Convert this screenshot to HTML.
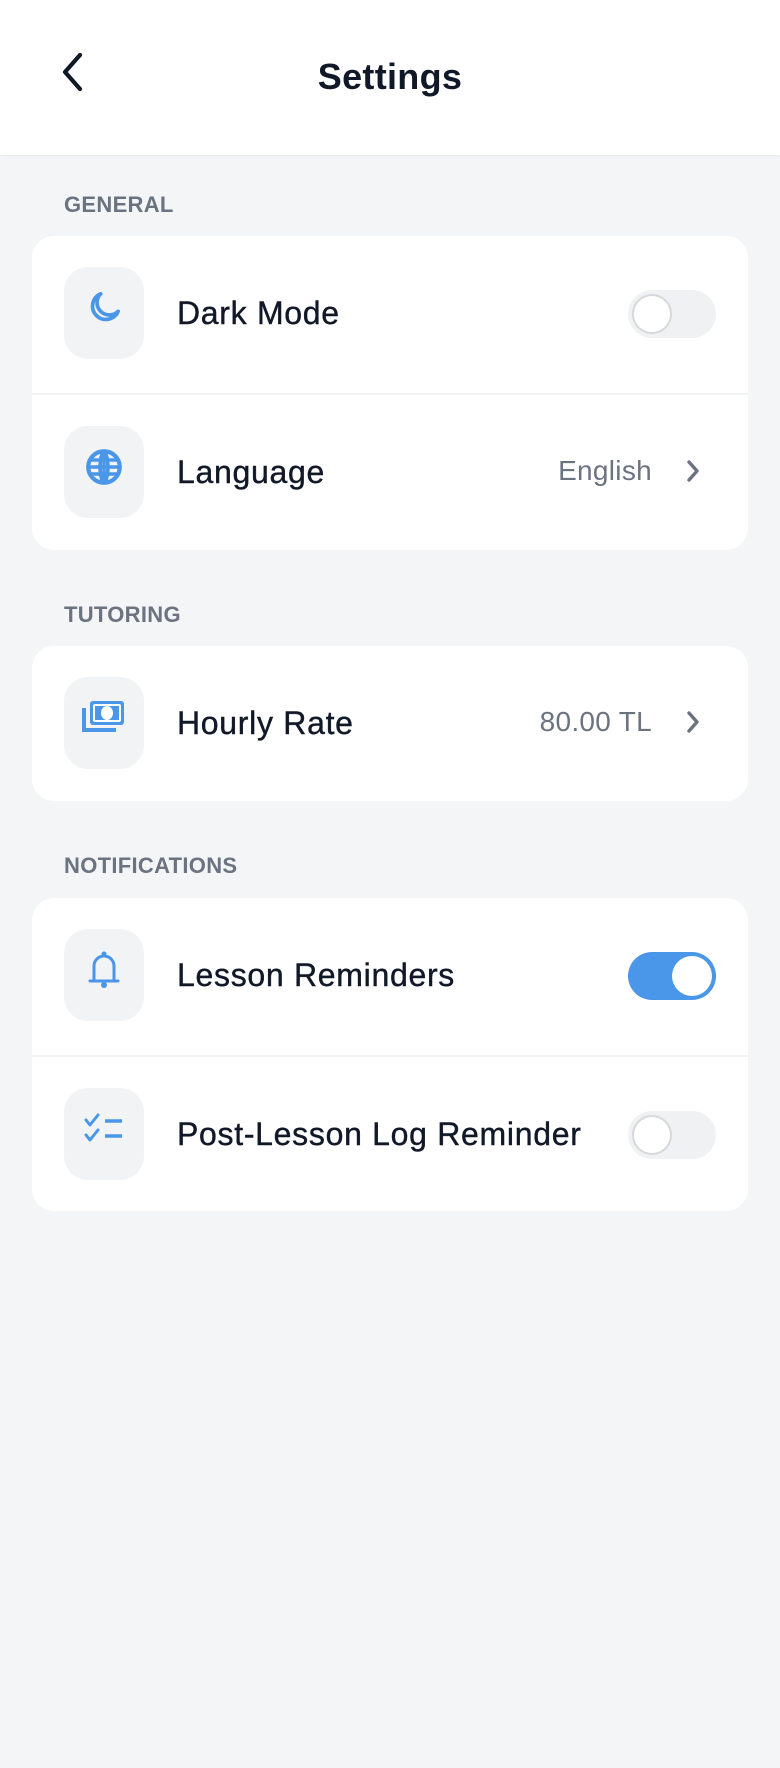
<!DOCTYPE html>
<html><head><meta charset="utf-8"><style>
*{margin:0;padding:0;box-sizing:border-box}
body{width:780px;height:1768px;background:#f4f5f7;font-family:"Liberation Sans",sans-serif;position:relative;overflow:hidden;color:#111827}
.hdr{position:absolute;left:0;top:0;width:780px;height:155px;background:#fff;box-shadow:0 1px 3px rgba(0,0,0,.06)}
.title{position:absolute;left:0;width:780px;top:56px;text-align:center;font-weight:bold;font-size:36px;color:#111827;letter-spacing:.3px}
.sec{position:absolute;left:64px;font-size:22px;font-weight:bold;color:#6b7280;letter-spacing:.3px}
.card{position:absolute;left:32px;width:716px;background:#fff;border-radius:22px;overflow:hidden}
.row{position:relative;height:157px}
.row+.row{border-top:2px solid #f1f2f4}
.ib{position:absolute;left:32px;top:31px;width:80px;height:92px;border-radius:24px;background:#f2f3f5;display:flex;align-items:center;justify-content:center}
.ib svg{margin-top:-10px}
.lbl{position:absolute;left:145px;top:59px;font-size:32px;color:#111827;letter-spacing:.7px;-webkit-text-stroke:.4px #111827}
.val{position:absolute;right:96px;top:60px;font-size:28px;color:#6b7280;letter-spacing:.3px}
.chev{position:absolute;right:46px;top:63px}
.tg{position:absolute;right:32px;top:54px;width:88px;height:48px;border-radius:24px;background:#f0f1f3}
.tg i{position:absolute;left:4px;top:4px;width:40px;height:40px;border-radius:50%;background:#fff;border:2px solid #d6d8dc}
.tg.on{background:#4a96e8}
.tg.on i{left:44px;border:none}
</style></head><body>
<div class="hdr">
<svg style="position:absolute;left:58px;top:52px" width="28" height="40" viewBox="0 0 28 40"><path d="M22 3 L7 20 L22 37" fill="none" stroke="#111827" stroke-width="4.2" stroke-linecap="round" stroke-linejoin="round"/></svg>
<div class="title">Settings</div>
</div>

<div class="sec" style="top:192px">GENERAL</div>
<div class="card" style="top:236px;height:314px">
 <div class="row">
  <div class="ib"><svg width="40" height="40" viewBox="0 0 24 24"><path d="M10 3.5A8 8 0 1 0 20.5 14 6.5 6.5 0 0 1 10 3.5z" fill="none" stroke="#4a96e8" stroke-width="2.2" stroke-linejoin="round"/></svg></div>
  <div class="lbl">Dark Mode</div>
  <div class="tg"><i></i></div>
 </div>
 <div class="row">
  <div class="ib"><svg width="42" height="42" viewBox="0 0 24 24"><circle cx="12" cy="12" r="9" fill="none" stroke="#4a96e8" stroke-width="2.4"/><path d="M3 12h18M12 3c-3 3-3 15 0 18M12 3c3 3 3 15 0 18M12 3v18M4.5 8h15M4.5 16h15" fill="none" stroke="#4a96e8" stroke-width="2"/></svg></div>
  <div class="lbl">Language</div>
  <div class="val">English</div>
  <svg class="chev" width="18" height="26" viewBox="0 0 18 26"><path d="M5 4l8 9-8 9" fill="none" stroke="#6b7280" stroke-width="3.4" stroke-linecap="round" stroke-linejoin="round"/></svg>
 </div>
</div>

<div class="sec" style="top:602px">TUTORING</div>
<div class="card" style="top:646px;height:155px">
 <div class="row">
  <div class="ib"><svg width="46" height="40" viewBox="0 0 46 40"><rect x="9" y="3" width="34" height="24" rx="3" fill="#4a96e8"/><ellipse cx="26" cy="15" rx="6" ry="7" fill="#fff"/><rect x="13" y="7" width="26" height="16" rx="1" fill="none" stroke="#fff" stroke-width="2"/><path d="M3 10v22h32" fill="none" stroke="#4a96e8" stroke-width="4"/></svg></div>
  <div class="lbl">Hourly Rate</div>
  <div class="val">80.00 TL</div>
  <svg class="chev" width="18" height="26" viewBox="0 0 18 26"><path d="M5 4l8 9-8 9" fill="none" stroke="#6b7280" stroke-width="3.4" stroke-linecap="round" stroke-linejoin="round"/></svg>
 </div>
</div>

<div class="sec" style="top:853px">NOTIFICATIONS</div>
<div class="card" style="top:898px;height:313px">
 <div class="row">
  <div class="ib"><svg width="36" height="44" viewBox="0 0 36 44"><path d="M8 33V18a10 10 0 0 1 20 0v15" fill="none" stroke="#4a96e8" stroke-width="3"/><path d="M4 33h28" stroke="#4a96e8" stroke-width="3" stroke-linecap="round"/><circle cx="18" cy="6" r="2.5" fill="#4a96e8"/><circle cx="18" cy="37" r="3" fill="#4a96e8"/></svg></div>
  <div class="lbl">Lesson Reminders</div>
  <div class="tg on"><i></i></div>
 </div>
 <div class="row">
  <div class="ib"><svg width="42" height="34" viewBox="0 0 42 34"><path d="M3 8l4 5 8-10M3 23l4 5 8-10" fill="none" stroke="#4a96e8" stroke-width="3" stroke-linecap="round" stroke-linejoin="round"/><path d="M22 9h17M22 24h17" stroke="#4a96e8" stroke-width="3.5"/></svg></div>
  <div class="lbl">Post-Lesson Log Reminder</div>
  <div class="tg"><i></i></div>
 </div>
</div>
</body></html>
